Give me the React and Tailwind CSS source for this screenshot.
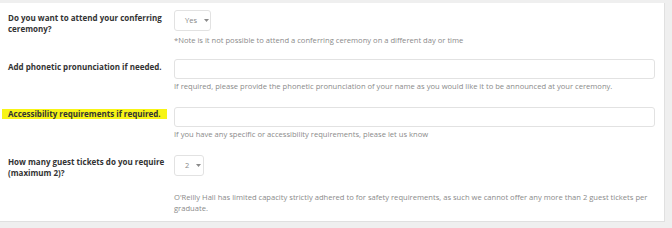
import React from "react";

const Caret = () => (
  <svg width="5" height="3" viewBox="0 0 5 3" className="ml-[7px]">
    <path d="M0 0 L5 0 L2.5 3 Z" fill="#8a8a8a" />
  </svg>
);

const Select = ({ value, width }) => (
  <div
    className={`flex items-center h-[21px] border border-[#e2e2e2] rounded-[3px] bg-white pl-[10px] text-[7.5px] text-[#888] ${width}`}
  >
    {value}
    <Caret />
  </div>
);

const Input = () => (
  <div className="h-[20px] w-full border border-[#e2e2e2] rounded-[3px] bg-white" />
);

const Row = ({ label, children, className = "" }) => (
  <div className={`flex ${className}`}>
    <div className="w-[174px] shrink-0 pl-2 pr-2 text-[8px] leading-[11px] font-bold text-[#333]">
      {label}
    </div>
    <div className="flex-1 pr-[9px]">{children}</div>
  </div>
);

const Help = ({ children, className = "" }) => (
  <p className={`text-[7.6px] leading-[11px] text-[#8a8a8a] ${className}`}>{children}</p>
);

export default function App() {
  return (
    <div
      className="w-[672px] h-[228px] bg-[#efefef] pt-[3px] pr-[7px] pb-[6px]"
      style={{ fontFamily: '"Open Sans", sans-serif' }}
    >
      <div className="h-[219px] bg-white border-r border-b border-[#e0e0e0] pt-[7px]">
        <Row label="Do you want to attend your conferring ceremony?" className="[&>div:first-child]:pt-[2px]">
          <Select value="Yes" width="w-[37px]" />
          <Help className="mt-[4px]">
            *Note is it not possible to attend a conferring ceremony on a different day or time
          </Help>
        </Row>

        <Row label="Add phonetic pronunciation if needed." className="mt-[13px] [&>div:first-child]:pt-[2px]">
          <Input />
          <Help className="mt-[2px]">
            If required, please provide the phonetic pronunciation of your name as you would like it to be announced at your ceremony.
          </Help>
        </Row>

        <Row
          label={
            <span className="-ml-[6px] px-[6px] bg-[#f7f416] inline-block whitespace-nowrap leading-[10px]">
              Accessibility requirements if required.
            </span>
          }
          className="mt-[15px] [&>div:first-child]:pt-[1px]"
        >
          <Input />
          <Help className="mt-[2px]">
            If you have any specific or accessibility requirements, please let us know
          </Help>
        </Row>

        <Row label="How many guest tickets do you require (maximum 2)?" className="mt-[15px] [&>div:first-child]:pt-[1px]">
          <Select value="2" width="w-[30px]" />
          <Help className="mt-[16px]">
            O'Reilly Hall has limited capacity strictly adhered to for safety requirements, as such we cannot offer any more than 2 guest tickets per graduate.
          </Help>
        </Row>
      </div>
    </div>
  );
}
